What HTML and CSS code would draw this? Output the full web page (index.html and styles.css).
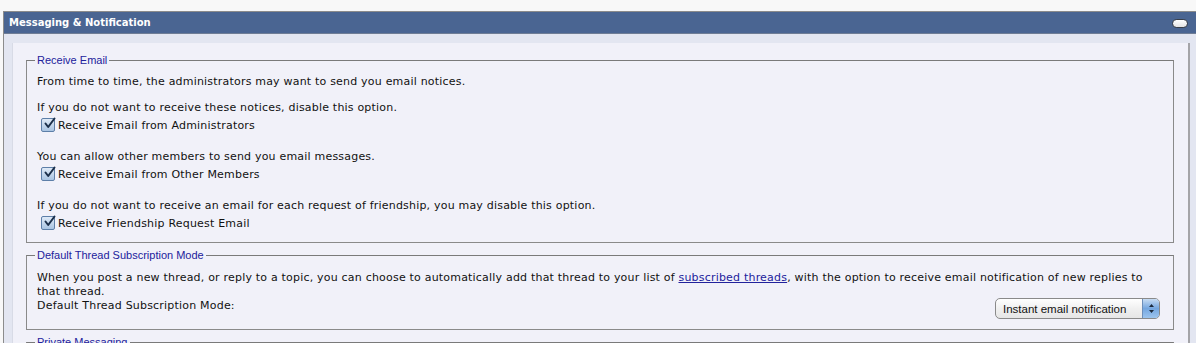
FILE: index.html
```html
<!DOCTYPE html>
<html>
<head>
<meta charset="utf-8">
<link rel="stylesheet" href="styles.css">
</head>
<body>
<div class="panel">
  <div class="panel-head">
    <span class="panel-title">Messaging &amp; Notification</span>
    <span class="collapse"></span>
  </div>
  <div class="surround">
    <div class="inner">
      <fieldset class="fs fs-email">
        <legend>Receive Email</legend>
        <p class="intro">From time to time, the administrators may want to send you email notices.</p>
        <div class="opt">
          <p>If you do not want to receive these notices, disable this option.</p>
          <label class="check"><span class="box"><svg width="13" height="13" viewBox="0 0 13 13"><path d="M2.5 6.5 L5.2 10 L11.5 1.5" fill="none" stroke="#1b2f4a" stroke-width="2" stroke-linecap="round" stroke-linejoin="round"/></svg></span>Receive Email from Administrators</label>
        </div>
        <div class="opt">
          <p>You can allow other members to send you email messages.</p>
          <label class="check"><span class="box"><svg width="13" height="13" viewBox="0 0 13 13"><path d="M2.5 6.5 L5.2 10 L11.5 1.5" fill="none" stroke="#1b2f4a" stroke-width="2" stroke-linecap="round" stroke-linejoin="round"/></svg></span>Receive Email from Other Members</label>
        </div>
        <div class="opt">
          <p>If you do not want to receive an email for each request of friendship, you may disable this option.</p>
          <label class="check"><span class="box"><svg width="13" height="13" viewBox="0 0 13 13"><path d="M2.5 6.5 L5.2 10 L11.5 1.5" fill="none" stroke="#1b2f4a" stroke-width="2" stroke-linecap="round" stroke-linejoin="round"/></svg></span>Receive Friendship Request Email</label>
        </div>
      </fieldset>
      <fieldset class="fs fs-sub">
        <legend>Default Thread Subscription Mode</legend>
        <p>When you post a new thread, or reply to a topic, you can choose to automatically add that thread to your list of <a href="#">subscribed threads</a>, with the option to receive email notification of new replies to that thread.</p>
        <div class="row">
          <span>Default Thread Subscription Mode:</span>
          <div class="select">
            <span class="select-text">Instant email notification</span>
            <span class="select-arrows"><svg width="7" height="11" viewBox="0 0 7 11"><path d="M3.5 1 L6 4 L1 4 Z M3.5 10 L6 7 L1 7 Z" fill="#1c2a3d"/></svg></span>
          </div>
        </div>
      </fieldset>
      <fieldset class="fs fs-pm">
        <legend>Private Messaging</legend>
        <p>Private messaging options.</p>
      </fieldset>
    </div>
  </div>
</div>
</body>
</html>
```
FILE: styles.css
```css
html, body {
  margin: 0;
  padding: 0;
  background: #f8f8f8;
  overflow: hidden;
}
body {
  padding-top: 11px;
  font-family: "DejaVu Sans", Verdana, sans-serif;
  font-size: 11px;
  letter-spacing: 0.2px;
  color: #111;
}
.panel {
  margin: 0 -6px 0 3px;
  border: 1px solid #8c8c8c;
}
.panel-head {
  height: 22px;
  background: #4a6592;
  display: flex;
  align-items: center;
  justify-content: space-between;
  padding: 0 13px 0 5px;
  border-bottom: 1px solid #6f7d95;
  box-sizing: border-box;
}
.panel-title {
  color: #fff;
  font-weight: bold;
  font-size: 10px;
  letter-spacing: 0;
}
.collapse {
  width: 14px;
  height: 7px;
  background: linear-gradient(#ffffff, #e4e4e4);
  border: 1px solid #3a3f48;
  border-radius: 5px;
  margin-top: 1px;
}
.surround {
  background: #e3e6f1;
  padding: 9px 11px 0 8px;
}
.inner {
  background: #f1f1f9;
  border-right: 2px solid #a4a4a8;
  border-left: 1px solid #d8dbe6;
  padding: 11px 14px 0 13px;
}
.fs {
  margin: 0 0 6px 0;
  border: 1px solid #8a8a8a;
  border-top-color: #7a7a7a;
  padding: 8px 10px 10px 10px;
  min-width: 0;
}
.fs legend {
  font-family: "Liberation Sans", Arial, sans-serif;
  font-size: 11px;
  line-height: 13px;
  letter-spacing: 0;
  color: #22229c;
  padding: 0 2px;
  margin-left: -2px;
}
.fs p {
  margin: 0;
  line-height: 14px;
}
.fs .intro {
  margin-bottom: 12px;
}
.opt + .opt {
  margin-top: 16px;
}
.check {
  display: flex;
  align-items: center;
  height: 18px;
  margin-top: 1px;
  padding-left: 4px;
}
.box {
  width: 12px;
  height: 12px;
  border: 1px solid #5d7fa8;
  border-radius: 2px;
  background: linear-gradient(#dfeaf7, #a9c4e2);
  margin-right: 3px;
  display: flex;
  position: relative;
}
.box svg {
  position: absolute;
  left: 1px;
  top: -2px;
}
.fs-sub {
  padding-top: 9px;
  padding-bottom: 10px;
}
.fs-sub a {
  color: #22229c;
}
.row {
  display: flex;
  justify-content: space-between;
  align-items: flex-start;
  line-height: 14px;
}
.select {
  display: flex;
  align-items: stretch;
  height: 21px;
  box-sizing: border-box;
  width: 165px;
  border: 1px solid #8a8a8a;
  border-radius: 5px;
  background: linear-gradient(#ffffff, #f0f0f0 50%, #e6e6e6);
  margin-right: 3px;
  margin-top: -1px;
  overflow: hidden;
  font-family: "Liberation Sans", Arial, sans-serif;
  font-size: 11.5px;
  letter-spacing: 0;
}
.select-text {
  flex: 1;
  padding-left: 7px;
  display: flex;
  align-items: center;
}
.select-arrows {
  width: 16px;
  display: flex;
  align-items: center;
  justify-content: center;
  background: linear-gradient(#c7dcf3, #74a6df 50%, #9cc4ee);
  border-left: 1px solid #6d8fba;
}
```
